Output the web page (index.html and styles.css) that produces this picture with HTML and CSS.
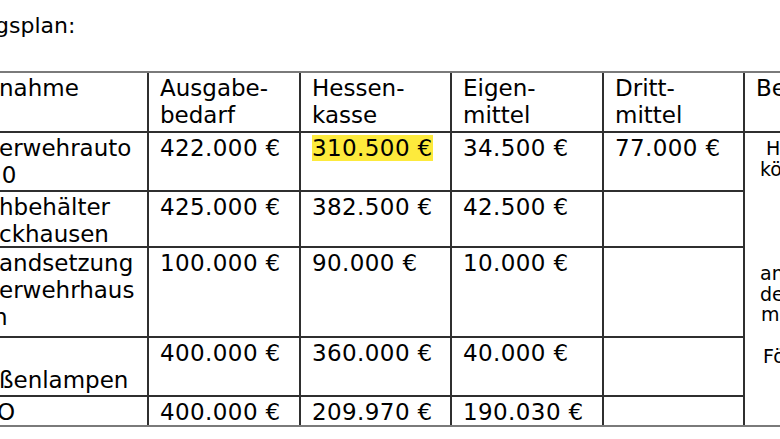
FILE: index.html
```html
<!DOCTYPE html>
<html lang="de">
<head>
<meta charset="utf-8">
<title>Finanzierungsplan</title>
<link rel="stylesheet" href="styles.css">
</head>
<body>
<p class="title">gsplan:</p>
<div class="plan">
  <div class="cell c1"><div class="in">nahme</div></div>
  <div class="cell">Ausgabe-<br>bedarf</div>
  <div class="cell">Hessen-<br>kasse</div>
  <div class="cell">Eigen-<br>mittel</div>
  <div class="cell">Dritt-<br>mittel</div>
  <div class="cell">Bemerkung</div>

  <div class="cell c1"><div class="in">erwehrauto<br><span class="cut10">10</span></div></div>
  <div class="cell num">422.000 €</div>
  <div class="cell num"><span class="hl">310.500 €</span></div>
  <div class="cell num">34.500 €</div>
  <div class="cell num">77.000 €</div>
  <div class="cell note">
    <div class="nl i6">H</div>
    <div class="nl">können</div>
    <div class="nl">&nbsp;</div>
    <div class="nl">&nbsp;</div>
    <div class="nl">&nbsp;</div>
    <div class="nl">&nbsp;</div>
    <div class="nl">an</div>
    <div class="nl">den</div>
    <div class="nl i1">m</div>
    <div class="nl">&nbsp;</div>
    <div class="nl i3">Förder</div>
  </div>

  <div class="cell c1"><div class="in">hbehälter<br>ckhausen</div></div>
  <div class="cell num">425.000 €</div>
  <div class="cell num">382.500 €</div>
  <div class="cell num">42.500 €</div>
  <div class="cell"></div>

  <div class="cell c1"><div class="in">andsetzung<br>erwehrhaus<br><span class="cutn">n</span></div></div>
  <div class="cell num">100.000 €</div>
  <div class="cell num">90.000 €</div>
  <div class="cell num">10.000 €</div>
  <div class="cell"></div>

  <div class="cell c1"><div class="in">&nbsp;<br>ßenlampen</div></div>
  <div class="cell num">400.000 €</div>
  <div class="cell num">360.000 €</div>
  <div class="cell num">40.000 €</div>
  <div class="cell"></div>

  <div class="cell c1"><div class="in"><span class="cuto">O</span></div></div>
  <div class="cell num">400.000 €</div>
  <div class="cell num">209.970 €</div>
  <div class="cell num">190.030 €</div>
  <div class="cell"></div>
</div>
</body>
</html>
```

FILE: styles.css
```css
html, body {
  margin: 0;
  padding: 0;
  background: #fff;
}

body {
  width: 780px;
  height: 439px;
  overflow: hidden;
  font-family: "DejaVu Sans", Verdana, sans-serif;
  color: #000;
}

.title {
  margin: 0;
  padding-top: 13px;
  font-size: 22px;
  line-height: 25px;
  text-indent: -5px;
  white-space: nowrap;
}

.plan {
  margin-top: 33px;
  display: grid;
  grid-template-columns: 147px 150px 149px 150px 139px 200px;
  grid-template-rows: 58px 57px 54px 88px 57px 28px;
  gap: 2px;
  width: max-content;
  background: #2f2f2f;
  border-top: 2px solid #7a7a7a;
  border-bottom: 2px solid #7a7a7a;
  font-size: 23px;
  line-height: 27px;
}

.cell {
  background: #fff;
  padding: 2px 0 0 11px;
  white-space: nowrap;
  overflow: visible;
}

.c1 {
  padding-left: 0;
}

.c1 .in {
  margin-left: -1px;
}

.cut10 {
  margin-left: -12px;
}

.cutn {
  margin-left: -6px;
}

.cuto {
  margin-left: -2px;
}

.num {
  letter-spacing: 0.4px;
}

.hl {
  background: #fdea3c;
}

.note {
  grid-column: 6;
  grid-row: span 5;
  padding: 5px 0 0 15px;
  font-size: 19px;
  line-height: 20.8px;
}

.i6 { padding-left: 6px; }
.i3 { padding-left: 3px; }
.i1 { padding-left: 1px; }
```
